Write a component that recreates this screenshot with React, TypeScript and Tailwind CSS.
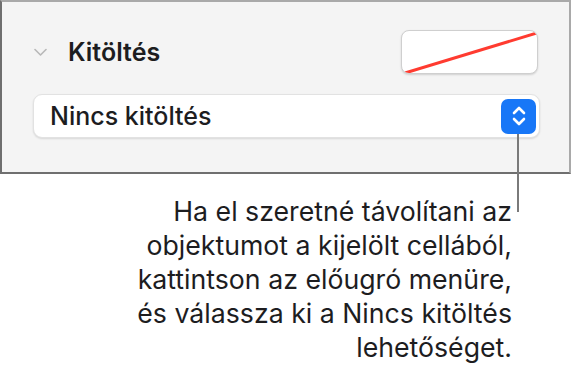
import React from "react";

export default function App() {
  const font = { fontFamily: "Inter, 'Noto Sans', sans-serif" };
  return (
    <div className="relative w-[572px] h-[378px] bg-white text-[#1d1d1f]" style={font}>
      <div className="w-[571px] h-[174px] bg-[#f4f4f4] border-t-2 border-l-2 border-b-2 border-r-2 border-t-[#a9a9a9] border-r-[#a9a9a9] border-l-[#6f6f6f] border-b-[#6f6f6f] pl-[31px] pr-[29px] pt-[28px]">
        <div className="flex items-center h-[44px]">
          <svg width="13" height="9" viewBox="0 0 13 9" className="ml-[1px]">
            <path d="M1 1.5 L6.5 7 L12 1.5" fill="none" stroke="#b8b8b8" strokeWidth="1.6" strokeLinecap="round" strokeLinejoin="round" />
          </svg>
          <div className="ml-[21px] text-[25px] font-semibold leading-none">Kitöltés</div>
          <div className="ml-auto mr-[2px] w-[137px] h-[44px] rounded-[8px] bg-white border border-[#cfcfcf] shadow-[0_1px_2px_rgba(0,0,0,0.15)] overflow-hidden">
            <svg width="137" height="44" viewBox="0 0 137 44">
              <line x1="3" y1="42" x2="135" y2="2" stroke="#ff3b30" strokeWidth="3" />
            </svg>
          </div>
        </div>
        <div className="mt-[20px] h-[44px] rounded-[9px] bg-white border border-[#e2e2e2] shadow-[0_1px_2px_rgba(0,0,0,0.12)] flex items-center pl-[16px] pr-[3px]">
          <div className="text-[25px] font-medium leading-none">Nincs kitöltés</div>
          <div className="ml-auto w-[35px] h-[35px] rounded-[7px] bg-[#1877f7] flex items-center justify-center">
            <svg width="16" height="26" viewBox="0 0 16 26">
              <path d="M3 10 L8 5 L13 10" fill="none" stroke="white" strokeWidth="2.6" strokeLinecap="round" strokeLinejoin="round" />
              <path d="M3 16 L8 21 L13 16" fill="none" stroke="white" strokeWidth="2.6" strokeLinecap="round" strokeLinejoin="round" />
            </svg>
          </div>
        </div>
      </div>
      <div className="absolute left-[517px] top-[134px] w-[2px] h-[78px] bg-[#7a7a7a]" />
      <div className="mt-[20px] w-[512px] text-right text-[26.7px] leading-[34px]">
        <div>Ha el szeretné távolítani az</div>
        <div>objektumot a kijelölt cellából,</div>
        <div>kattintson az előugró menüre,</div>
        <div>és válassza ki a Nincs kitöltés</div>
        <div>lehetőséget.</div>
      </div>
    </div>
  );
}
